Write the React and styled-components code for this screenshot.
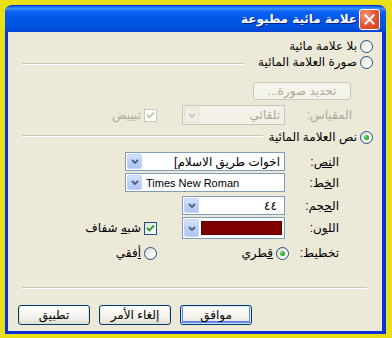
import React from 'react'
import styled, { createGlobalStyle } from 'styled-components'

const GlobalStyle = createGlobalStyle`
  html, body {
    margin: 0;
    padding: 0;
  }
  body {
    background: #e8df16;
    font-family: "Liberation Sans", "DejaVu Sans", sans-serif;
    font-size: 12px;
    color: #000;
  }
`

const Page = styled.div`
  padding: 5px;
`

const Window = styled.div`
  width: 381px;
  height: 329px;
  display: flex;
  flex-direction: column;
`

const TitleBar = styled.div`
  height: 27px;
  flex-shrink: 0;
  box-sizing: border-box;
  border-radius: 7px 7px 0 0;
  background: linear-gradient(
    to bottom,
    #0a5df0 0%,
    #3c8efc 10%,
    #0a62f5 22%,
    #0055e5 50%,
    #0053e0 80%,
    #0043cf 100%
  );
  border-top: 1px solid #0831d9;
  display: flex;
  direction: rtl;
  align-items: center;
  padding-right: 6px;
  gap: 2px;
`

const CloseButton = styled.div`
  width: 21px;
  height: 21px;
  box-sizing: border-box;
  border: 1px solid #fff;
  border-radius: 3px;
  background: radial-gradient(circle at 30% 30%, #f59a7d 0%, #e55a37 45%, #c8401f 100%);
  display: flex;
  align-items: center;
  justify-content: center;
`

const Title = styled.div`
  color: #fff;
  font-weight: bold;
  font-size: 12px;
  font-family: "DejaVu Sans", sans-serif;
  text-shadow: 1px 1px 0 #0a1e8c;
`

const Body = styled.div`
  flex: 1;
  background: #ece9d8;
  border: solid #0831d9;
  border-width: 0 4px 3px 3px;
  direction: rtl;
  display: flex;
  flex-direction: column;
`

const Row = styled.div`
  display: flex;
  align-items: center;
  height: ${p => p.$h || 16}px;
  margin-top: ${p => p.$mt || 0}px;
  padding-right: ${p => p.$pr || 0}px;
  padding-left: ${p => p.$pl || 0}px;
  justify-content: ${p => (p.$end ? 'flex-end' : 'flex-start')};
  gap: ${p => p.$gap || 0}px;
`

const Label = styled.span`
  width: ${p => (p.$w ? `${p.$w}px` : 'auto')};
  flex-shrink: 0;
  white-space: nowrap;
  color: ${p => (p.$disabled ? '#aca899' : '#000')};
  margin-right: ${p => p.$mr || 0}px;
`

const U = styled.span`
  text-decoration: underline;
`

const RadioCircle = styled.span`
  width: 13px;
  height: 13px;
  box-sizing: border-box;
  flex-shrink: 0;
  border-radius: 50%;
  border: 1px solid #1c5180;
  background: linear-gradient(135deg, #dcd9cc 0%, #f4f3ee 50%, #fff 100%);
  display: flex;
  align-items: center;
  justify-content: center;
  margin-left: 3px;
  &::after {
    content: '';
    display: ${p => (p.$checked ? 'block' : 'none')};
    width: 5px;
    height: 5px;
    border-radius: 50%;
    background: radial-gradient(circle at 35% 35%, #6fe06a 0%, #21a121 70%, #118011 100%);
  }
`

const Option = styled.label`
  display: flex;
  align-items: center;
  width: ${p => (p.$w ? `${p.$w}px` : 'auto')};
  flex-shrink: 0;
  white-space: nowrap;
  color: ${p => (p.$disabled ? '#aca899' : '#000')};
  margin-right: ${p => p.$mr || 0}px;
`

const CheckBox = styled.span`
  width: 13px;
  height: 13px;
  box-sizing: border-box;
  flex-shrink: 0;
  border: 1px solid ${p => (p.$disabled ? '#cac8bb' : '#1c5180')};
  background: ${p =>
    p.$disabled ? '#fff' : 'linear-gradient(135deg, #dcdcd7 0%, #f5f5f2 55%, #fff 100%)'};
  display: flex;
  align-items: center;
  justify-content: center;
  margin-left: 3px;
`

const Rule = styled.div`
  flex: ${p => (p.$grow ? 1 : 'none')};
  height: 0;
  border-top: 1px solid #c9c6b4;
  border-bottom: 1px solid #fff;
  margin-right: ${p => p.$mr || 0}px;
  margin-left: ${p => p.$ml || 0}px;
  margin-top: ${p => p.$mt || 0}px;
  position: relative;
  top: ${p => p.$shift || 0}px;
`

const PushButton = styled.div`
  width: ${p => p.$w || 72}px;
  height: ${p => p.$h || 20}px;
  box-sizing: border-box;
  flex-shrink: 0;
  border: 1px solid ${p => (p.$disabled ? '#c9c7ba' : '#003c74')};
  border-radius: 3px;
  color: ${p => (p.$disabled ? '#aca899' : '#000')};
  background: ${p =>
    p.$disabled ? '#f5f4ea' : 'linear-gradient(to bottom, #ffffff 0%, #f3f2ec 60%, #e3e0d4 100%)'};
  box-shadow: ${p =>
    p.$default
      ? 'inset 0 0 0 1px #cee7ff, inset 0 -1px 0 2px #6982ee'
      : p.$disabled
      ? 'none'
      : 'inset 0 -1px 0 1px #e3e0d1'};
  display: flex;
  align-items: center;
  justify-content: center;
  white-space: nowrap;
`

const Combo = styled.div`
  width: ${p => p.$w}px;
  height: ${p => p.$h || 19}px;
  box-sizing: border-box;
  flex-shrink: 0;
  border: 1px solid ${p => (p.$disabled ? '#c9c7ba' : '#7f9db9')};
  background: ${p => (p.$disabled ? '#f4f2e8' : '#fff')};
  display: flex;
  align-items: center;
  padding: 1px;
  gap: 2px;
`

const ComboText = styled.div`
  flex: 1;
  min-width: 0;
  overflow: hidden;
  white-space: nowrap;
  padding: 0 ${p => p.$pad || 3}px;
  direction: ${p => (p.$ltr ? 'ltr' : 'rtl')};
  text-align: ${p => (p.$ltr ? 'left' : 'right')};
  font-size: ${p => (p.$ltr ? 11 : 12)}px;
  color: ${p => (p.$disabled ? '#aca899' : '#000')};
`

const Swatch = styled.div`
  flex: 1;
  align-self: stretch;
  margin: 2px 1px 2px 0;
  background: #800000;
  border: 1px solid #5a0000;
`

const ArrowButton = styled.div`
  width: 15px;
  align-self: stretch;
  flex-shrink: 0;
  box-sizing: border-box;
  border-radius: 2px;
  border: 1px solid ${p => (p.$disabled ? '#e0ded3' : '#c3d3fd')};
  background: ${p =>
    p.$disabled
      ? '#f0efe7'
      : 'linear-gradient(to bottom, #d7e3fd 0%, #bcd0f8 50%, #afc5f5 100%)'};
  display: flex;
  align-items: center;
  justify-content: center;
`

const Chevron = ({ color }) => (
  <svg width="8" height="5" viewBox="0 0 8 5">
    <path d="M1 1 L4 4 L7 1" fill="none" stroke={color} strokeWidth="1.8" />
  </svg>
)

const Check = ({ color }) => (
  <svg width="9" height="8" viewBox="0 0 9 8">
    <path d="M1 4 L3.4 6.4 L8 1.5" fill="none" stroke={color} strokeWidth="1.9" />
  </svg>
)

const Radio = ({ checked, children, ...rest }) => (
  <Option {...rest}>
    <RadioCircle $checked={checked} />
    <span>{children}</span>
  </Option>
)

const CheckOption = ({ checked, disabled, children, ...rest }) => (
  <Option $disabled={disabled} {...rest}>
    <CheckBox $disabled={disabled}>
      {checked && <Check color={disabled ? '#c6c3b4' : '#21a121'} />}
    </CheckBox>
    <span>{children}</span>
  </Option>
)

const DropDown = ({ disabled, children, ...rest }) => (
  <Combo $disabled={disabled} {...rest}>
    {children}
    <ArrowButton $disabled={disabled}>
      <Chevron color={disabled ? '#c9c7ba' : '#4d6185'} />
    </ArrowButton>
  </Combo>
)

export default function App() {
  return (
    <>
      <GlobalStyle />
      <Page>
        <Window>
          <TitleBar>
            <CloseButton>
              <svg width="11" height="11" viewBox="0 0 11 11">
                <path d="M1.5 1.5 L9.5 9.5 M9.5 1.5 L1.5 9.5" stroke="#fff" strokeWidth="2" strokeLinecap="square" />
              </svg>
            </CloseButton>
            <Title>علامة مائية مطبوعة</Title>
          </TitleBar>
          <Body>
            <Row $mt={6} $pr={9}>
              <Radio>بلا علامة مائية</Radio>
            </Row>
            <Row $pr={9} $pl={14}>
              <Radio>صورة العلامة المائية</Radio>
              <Rule $grow $mr={14} $shift={2} />
            </Row>
            <Row $mt={12} $h={18} $pr={31}>
              <PushButton $w={98} $h={18} $disabled>تحديد صورة...</PushButton>
            </Row>
            <Row $mt={5} $h={20} $pr={30}>
              <Label $w={67} $disabled>المقياس:</Label>
              <DropDown $w={103} $h={20} disabled>
                <ComboText $disabled>تلقائي</ComboText>
              </DropDown>
              <CheckOption $mr={25} checked disabled>تبييض</CheckOption>
            </Row>
            <Row $mt={4} $pr={9} $pl={14}>
              <Radio checked>نص العلامة المائية</Radio>
              <Rule $grow $mr={6} $shift={-1} />
            </Row>
            <Row $mt={7} $h={19} $pr={43}>
              <Label $w={54}>ال<U>نص</U>:</Label>
              <DropDown $w={160} $h={19}>
                <ComboText>اخوات طريق الاسلام]</ComboText>
              </DropDown>
            </Row>
            <Row $mt={2} $h={19} $pr={43}>
              <Label $w={54}>ال<U>خ</U>ط:</Label>
              <DropDown $w={160} $h={19}>
                <ComboText $ltr $pad={2}>Times New Roman</ComboText>
              </DropDown>
            </Row>
            <Row $mt={4} $h={19} $pr={43}>
              <Label $w={54}>ال<U>ح</U>جم:</Label>
              <DropDown $w={103} $h={19}>
                <ComboText $pad={6}>٤٤</ComboText>
              </DropDown>
            </Row>
            <Row $mt={2} $h={22} $pr={43}>
              <Label $w={54}>الل<U>و</U>ن:</Label>
              <DropDown $w={103} $h={22}>
                <Swatch />
              </DropDown>
              <CheckOption $mr={25} checked>شب<U>ه</U> شفاف</CheckOption>
            </Row>
            <Row $mt={6} $pr={43}>
              <Label $w={50}>تخطيط:</Label>
              <Radio checked $w={132}><U>ق</U>طري</Radio>
              <Radio><U>أ</U>فقي</Radio>
            </Row>
            <Rule $mt={26} $ml={14} $mr={15} />
            <Row $mt={16} $h={20} $pl={10} $gap={9} $end>
              <PushButton $default>موافق</PushButton>
              <PushButton>إلغاء الأمر</PushButton>
              <PushButton>تطبيق</PushButton>
            </Row>
          </Body>
        </Window>
      </Page>
    </>
  )
}
